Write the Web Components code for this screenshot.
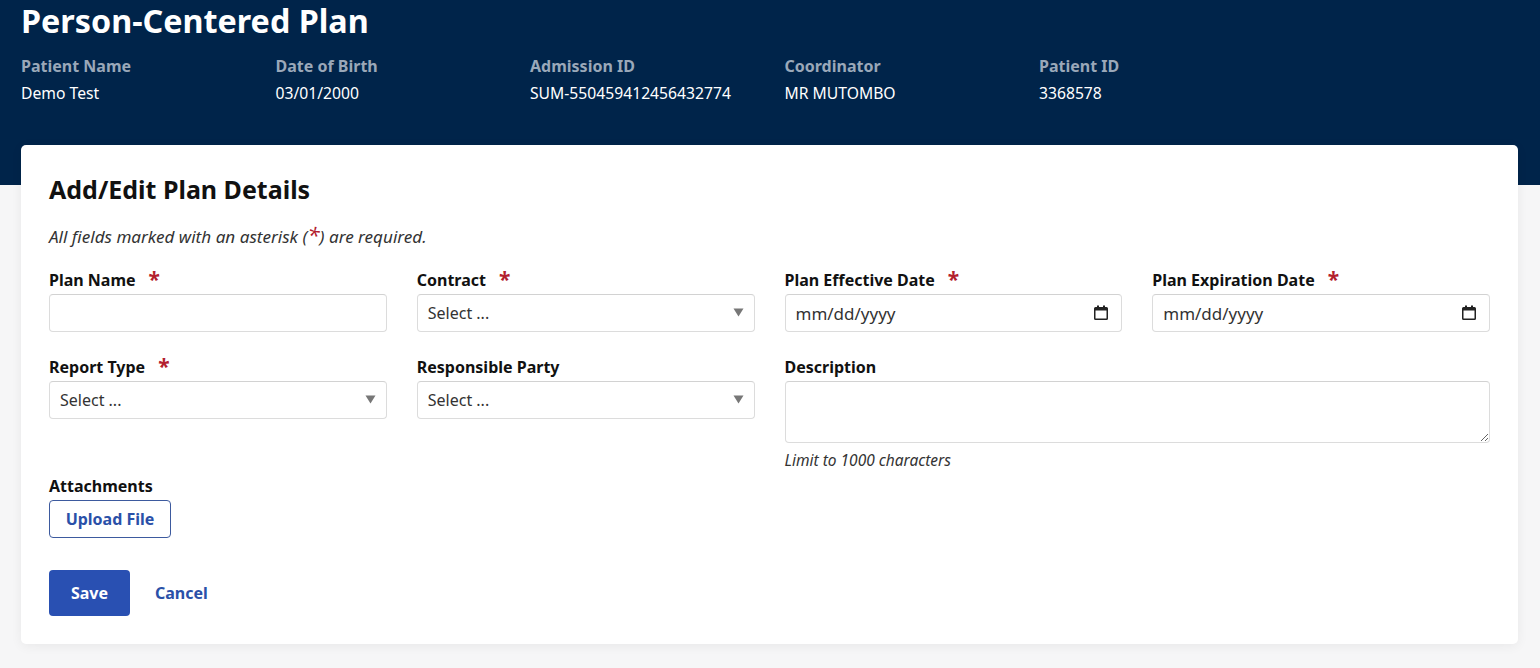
<!DOCTYPE html>
<html lang="en">
<head>
<meta charset="utf-8">
<title>Person-Centered Plan</title>
<style>
html, body { margin: 0; height: 100%; }
body {
    background: #f6f6f7;
    color: #111;
    font-family: "Noto Sans", "Open Sans", sans-serif;
    font-size: 16px;
}
</style>
</head>
<body>
<plan-page>
    <patient-banner slot="banner" title="Person-Centered Plan">
        <patient-fact label="Patient Name">Demo Test</patient-fact>
        <patient-fact label="Date of Birth">03/01/2000</patient-fact>
        <patient-fact label="Admission ID">SUM-550459412456432774</patient-fact>
        <patient-fact label="Coordinator">MR MUTOMBO</patient-fact>
        <patient-fact label="Patient ID">3368578</patient-fact>
    </patient-banner>
    <plan-form></plan-form>
</plan-page>

<script>
class PlanPage extends HTMLElement {
    constructor() {
        super();
        this.attachShadow({ mode: 'open' }).innerHTML = `
<style>
:host { display: block; }
.content { padding: 0 22px 24px 21px; margin-top: -40px; }
</style>
<slot name="banner"></slot>
<div class="content"><slot></slot></div>`;
    }
}

class PatientBanner extends HTMLElement {
    constructor() {
        super();
        this.attachShadow({ mode: 'open' }).innerHTML = `
<style>
:host {
    display: block;
    box-sizing: border-box;
    height: 185px;
    padding: 0 21px;
    background: #00244a;
    color: #fff;
}
h1 { margin: 0; font-size: 32.3px; line-height: 40px; font-weight: 700; }
.facts { display: flex; margin-top: 14px; }
</style>
<h1></h1>
<div class="facts"><slot></slot></div>`;
        this.shadowRoot.querySelector('h1').textContent = this.getAttribute('title');
    }
}

class PatientFact extends HTMLElement {
    constructor() {
        super();
        this.attachShadow({ mode: 'open' }).innerHTML = `
<style>
:host { display: block; width: 254.5px; }
.label { font-size: 16px; line-height: 24px; font-weight: 700; color: #9aa8b9; }
.value { font-size: 15.7px; line-height: 24px; margin-top: 3px; color: #fff; }
</style>
<div class="label"></div>
<div class="value"><slot></slot></div>`;
        this.shadowRoot.querySelector('.label').textContent = this.getAttribute('label');
    }
}

class FormField extends HTMLElement {
    constructor() {
        super();
        const required = this.hasAttribute('required') ? '<span class="star">*</span>' : '';
        this.attachShadow({ mode: 'open' }).innerHTML = `
<style>
:host { display: block; min-width: 0; }
.label {
    display: flex;
    height: 25px;
    font-size: 16px;
    line-height: 22px;
    font-weight: 700;
    color: #111;
}
.star { margin-left: 13px; font-size: 21px; line-height: 21px; color: #b3202e; }
</style>
<div class="label"><span class="text"></span>${required}</div>
<slot></slot>`;
        this.shadowRoot.querySelector('.text').textContent = this.getAttribute('label');
    }
}

const boxStyles = `
:host { display: block; }
.box {
    box-sizing: border-box;
    display: flex;
    align-items: center;
    justify-content: space-between;
    width: 100%;
    height: 38px;
    background: #fff;
    border: 1px solid #dcdcdc;
    border-top-color: #d2d2d2;
    border-radius: 4px;
    font-family: inherit;
    font-size: 16px;
    color: #333;
}`;

class TextBox extends HTMLElement {
    constructor() {
        super();
        this.attachShadow({ mode: 'open' }).innerHTML = `
<style>${boxStyles}
input { padding: 0 10px; outline: none; }
</style>
<input class="box" type="text">`;
    }
}

class SelectBox extends HTMLElement {
    constructor() {
        super();
        this.attachShadow({ mode: 'open' }).innerHTML = `
<style>${boxStyles}
.box { padding: 0 10px; }
svg { width: 11px; height: 9px; margin-top: -2px; }
</style>
<div class="box">
    <span>Select ...</span>
    <svg viewBox="0 0 11 9"><path d="M0.5 0.5h10L5.5 8.5z" fill="#777"/></svg>
</div>`;
    }
}

class DateBox extends HTMLElement {
    constructor() {
        super();
        this.attachShadow({ mode: 'open' }).innerHTML = `
<style>${boxStyles}
.box { padding: 0 13px 0 10px; font-size: 17px; }
svg { width: 14px; height: 15px; margin-top: -2px; }
</style>
<div class="box">
    <span>mm/dd/yyyy</span>
    <svg viewBox="0 0 14 15">
        <path d="M3 0.5h2v1.5h4V0.5h2V2h1.5A1.5 1.5 0 0 1 14 3.5v10a1.5 1.5 0 0 1-1.5 1.5h-11A1.5 1.5 0 0 1 0 13.5v-10A1.5 1.5 0 0 1 1.5 2H3z M1.5 5.5v8h11v-8z" fill="#222" fill-rule="evenodd"/>
    </svg>
</div>`;
    }
}

class NoteBox extends HTMLElement {
    constructor() {
        super();
        this.attachShadow({ mode: 'open' }).innerHTML = `
<style>${boxStyles}
textarea.box { display: block; height: 62px; padding: 6px 10px; resize: vertical; outline: none; }
.hint { margin-top: 7px; font-size: 15.5px; line-height: 20px; font-style: italic; color: #333; }
</style>
<textarea class="box"></textarea>
<div class="hint"><slot></slot></div>`;
    }
}

class PlanButton extends HTMLElement {
    constructor() {
        super();
        this.attachShadow({ mode: 'open' }).innerHTML = `
<style>
:host { display: inline-block; }
button {
    display: block;
    font-family: inherit;
    font-size: 16px;
    font-weight: 700;
    border-radius: 4px;
    cursor: pointer;
}
:host([kind=outline]) button {
    width: 122px;
    height: 38px;
    padding: 0;
    background: #fff;
    color: #2a50a8;
    border: 1px solid #3d5a9e;
}
:host([kind=primary]) button {
    width: 81px;
    height: 46px;
    padding: 0;
    background: #2950b2;
    color: #fff;
    border: 0;
}
:host([kind=link]) button {
    height: 46px;
    padding: 0;
    background: none;
    color: #2a50a8;
    border: 0;
}
</style>
<button type="button"><slot></slot></button>`;
    }
}

class PlanForm extends HTMLElement {
    constructor() {
        super();
        this.attachShadow({ mode: 'open' }).innerHTML = `
<style>
:host {
    display: block;
    box-sizing: border-box;
    height: 499px;
    padding: 27px 28px 0;
    background: #fff;
    border-radius: 5px;
    box-shadow: 0 2px 12px rgba(0, 0, 0, 0.06);
}
h2 { margin: 0; font-size: 25px; line-height: 34px; font-weight: 700; color: #111; }
.note { margin: 18px 0 0; font-size: 17.1px; line-height: 24px; font-style: italic; color: #333; }
.note b { font-size: 22px; line-height: 20px; font-weight: 400; color: #b3202e; }
.grid {
    display: grid;
    grid-template-columns: repeat(4, 1fr);
    column-gap: 30px;
    row-gap: 24px;
    margin-top: 20px;
}
.wide { grid-column: span 2; }
.attach { margin-top: 5px; }
.actions { display: flex; align-items: center; gap: 25px; margin-top: 32px; }
</style>
<h2>Add/Edit Plan Details</h2>
<p class="note">All fields marked with an asterisk (<b>*</b>) are required.</p>
<div class="grid">
    <form-field label="Plan Name" required><text-box></text-box></form-field>
    <form-field label="Contract" required><select-box></select-box></form-field>
    <form-field label="Plan Effective Date" required><date-box></date-box></form-field>
    <form-field label="Plan Expiration Date" required><date-box></date-box></form-field>
    <form-field label="Report Type" required><select-box></select-box></form-field>
    <form-field label="Responsible Party"><select-box></select-box></form-field>
    <form-field class="wide" label="Description"><note-box>Limit to 1000 characters</note-box></form-field>
</div>
<form-field class="attach" label="Attachments"><plan-button kind="outline">Upload File</plan-button></form-field>
<div class="actions">
    <plan-button kind="primary">Save</plan-button>
    <plan-button kind="link">Cancel</plan-button>
</div>`;
    }
}

customElements.define('plan-page', PlanPage);
customElements.define('patient-banner', PatientBanner);
customElements.define('patient-fact', PatientFact);
customElements.define('form-field', FormField);
customElements.define('text-box', TextBox);
customElements.define('select-box', SelectBox);
customElements.define('date-box', DateBox);
customElements.define('note-box', NoteBox);
customElements.define('plan-button', PlanButton);
customElements.define('plan-form', PlanForm);
</script>
</body>
</html>
